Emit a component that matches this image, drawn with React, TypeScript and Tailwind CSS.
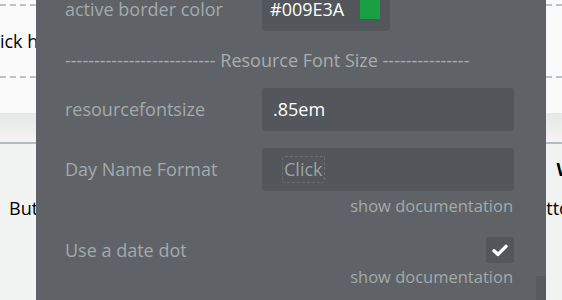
import React from "react";

const font = { fontFamily: '"Open Sans", "Noto Sans", sans-serif' };

export default function App() {
  return (
    <div
      className="relative w-[562px] h-[300px] overflow-hidden bg-[#f1f2f2]"
      style={font}
    >
      {/* background page */}
      <div className="flex flex-col w-full">
        <div className="h-[113px] bg-[#fafafa] flex flex-col">
          <div className="mt-[4px] border-t-2 border-dashed border-[#bcc2c6]" />
          <div className="h-[70px] flex items-center text-[18px] text-black whitespace-nowrap">
            <span className="ml-[-16px]">Click here</span>
          </div>
          <div className="border-t-2 border-dashed border-[#bcc2c6]" />
        </div>
        <div className="h-[29px] bg-gradient-to-b from-[#e6e7e7] to-[#f4f4f4]" />
        <div className="h-[2px] bg-[#b6bdc1]" />
        <div className="flex justify-end h-[52px] items-center">
          <span className="text-[18px] font-bold text-black mr-[-12px] mt-[-1px]">W</span>
        </div>
        <div className="flex justify-between items-center h-[24px] text-[18px] text-black whitespace-nowrap">
          <span className="ml-[9px]">Button</span>
          <span className="mr-[-19px]">Button</span>
        </div>
      </div>

      {/* overlay panel */}
      <div className="absolute left-[36px] top-0 w-[510px] h-[300px] bg-[#5f6367] text-[#a4a9ac]">
        <div className="flex flex-col pl-[29px] pr-[32px] mt-[-13px]">
          {/* active border color */}
          <div className="flex items-center h-[44px]">
            <div className="w-[197px] text-[18px]">active border color</div>
            <div className="w-[128px] h-[44px] bg-[#53575b] rounded-[3px] flex items-center pl-[8px] text-[18px] text-white">
              <span>#009E3A</span>
              <span className="ml-auto mr-[10px] w-[20px] h-[20px] bg-[#18a043]" />
            </div>
          </div>

          {/* divider */}
          <div className="mt-[17px] h-[24px] flex items-center text-[18px] text-[#a8adb0] whitespace-nowrap">
            -------------------------- Resource Font Size ---------------
          </div>

          {/* resourcefontsize */}
          <div className="mt-[16px] flex items-center h-[43px]">
            <div className="w-[197px] text-[18px]">resourcefontsize</div>
            <div className="flex-1 h-[43px] bg-[#53575b] rounded-[3px] flex items-center pl-[11px] text-[18px] text-white">
              .85em
            </div>
          </div>

          {/* Day Name Format */}
          <div className="mt-[17px] flex items-center h-[43px]">
            <div className="w-[197px] text-[18px]">Day Name Format</div>
            <div className="flex-1 h-[43px] bg-[#53575b] rounded-[3px] flex items-center pl-[20px] text-[18px]">
              <span className="border border-dashed border-[#6a6e72] rounded-[3px] px-[1px] leading-[25px] text-[#9da2a5]">
                Click
              </span>
            </div>
          </div>
          <div className="h-[22px] mt-[4px] flex justify-end items-center text-[16.5px] text-[#a4a9ac] pr-[1px]">
            show documentation
          </div>

          {/* Use a date dot */}
          <div className="mt-[20px] flex items-center h-[26px]">
            <div className="flex-1 text-[18px]">Use a date dot</div>
            <div className="w-[28px] h-[26px] bg-[#53575b] rounded-[2px] flex items-center justify-center">
              <svg width="16" height="13" viewBox="0 0 16 13">
                <path
                  d="M2 6.8 L6 10.4 L14 2.4"
                  fill="none"
                  stroke="#ffffff"
                  strokeWidth="3.4"
                  strokeLinecap="round"
                  strokeLinejoin="round"
                />
              </svg>
            </div>
          </div>
          <div className="h-[22px] mt-[3px] flex justify-end items-center text-[16.5px] text-[#a4a9ac] pr-[1px]">
            show documentation
          </div>
        </div>
        <div className="absolute right-0 top-[276px] w-[10px] h-[24px] bg-[#575b5f]" />
      </div>
    </div>
  );
}
